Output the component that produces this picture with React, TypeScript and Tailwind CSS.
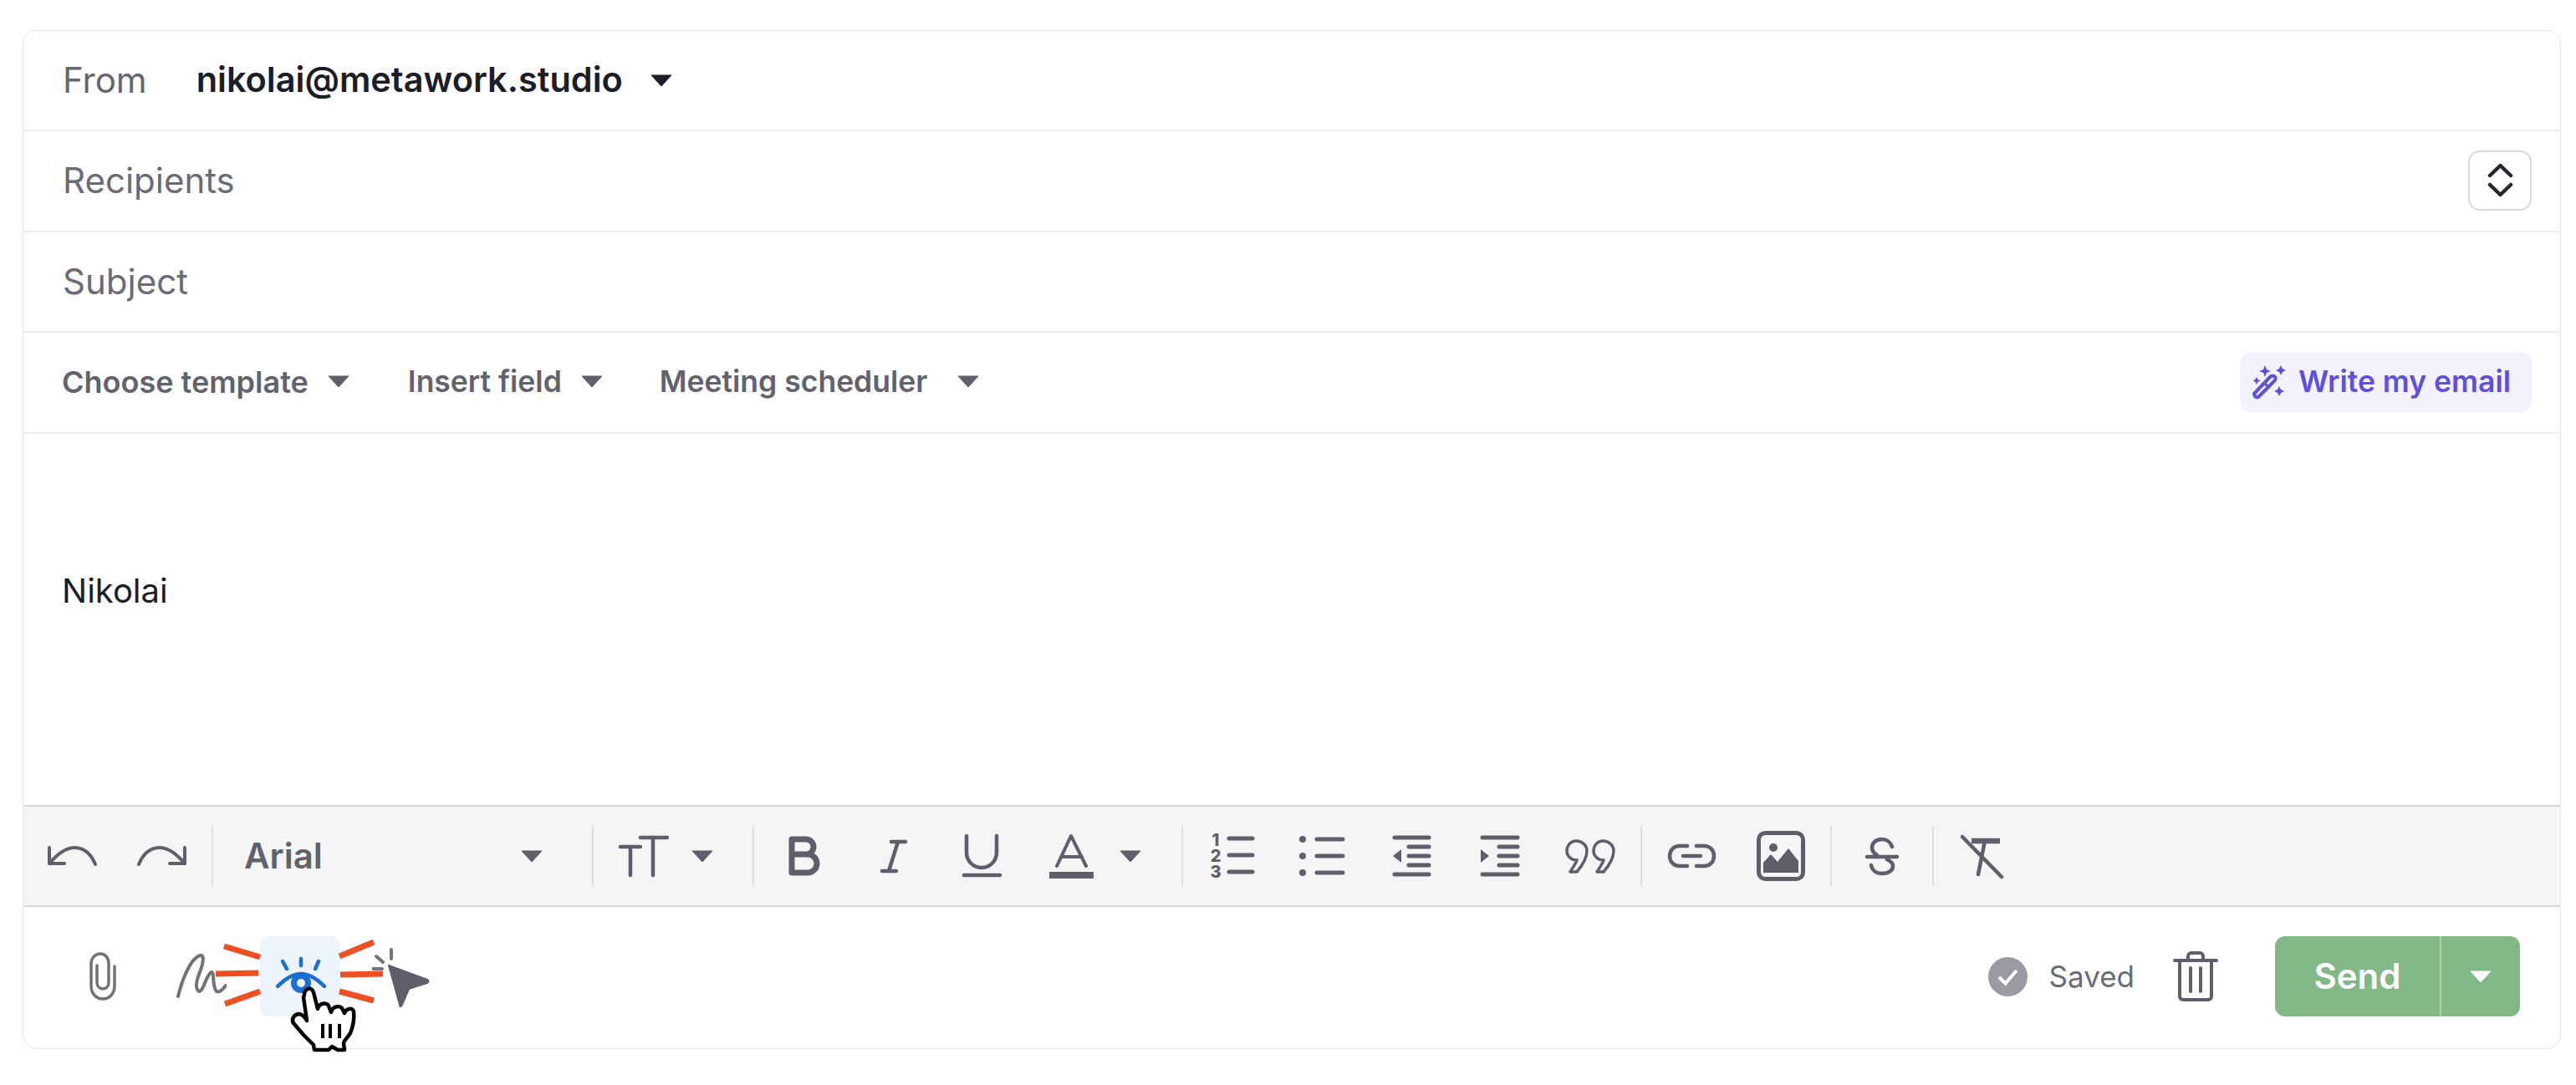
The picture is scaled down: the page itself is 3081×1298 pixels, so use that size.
import React from "react";

const Caret = ({ className = "", color = "#5f5f6b" }: { className?: string; color?: string }) => (
  <svg width="26" height="15" viewBox="0 0 26 15" className={"shrink-0 " + className}>
    <path d="M1 1H25L13 14Z" fill={color} stroke={color} strokeWidth="1" strokeLinejoin="round" />
  </svg>
);

const Sep = ({ className = "" }: { className?: string }) => (
  <div className={"w-[2px] h-[72px] shrink-0 bg-[#dedee1] " + className} />
);

const G = "#5f5f6b";

const Ico = ({ w, h, className = "", sw = 4.5, children }: { w: number; h: number; className?: string; sw?: number; children: React.ReactNode }) => (
  <svg width={w} height={h} viewBox={`0 0 ${w} ${h}`} fill="none" stroke={G} strokeWidth={sw} strokeLinecap="round" strokeLinejoin="round" className={"shrink-0 overflow-visible " + className}>
    {children}
  </svg>
);

export default function App() {
  return (
    <div className="w-[3081px] h-[1298px] bg-white pt-[36px] pl-[27px] font-['Inter',sans-serif] overflow-hidden">
      <div className="w-[3036px] h-[1219px] border border-[#e8e8eb] rounded-[16px] flex flex-col">
        <div className="h-[120px] shrink-0 border-b-2 border-[#eeeef0] flex items-center pl-[47px] text-[42px] leading-none">
          <span className="text-[#66666f]">From</span>
          <span className="ml-[59px] text-[41.5px] font-semibold text-[#1d1d29]">nikolai@metawork.studio</span>
          <Caret className="ml-[33px]" color="#1d1d29" />
        </div>
        <div className="h-[121px] shrink-0 border-b-2 border-[#eeeef0] flex items-center justify-between pl-[47px] pr-[34px] pb-[2px]">
          <span className="text-[42px] leading-none text-[#6b6b75]">Recipients</span>
          <button className="w-[76px] h-[72px] border-2 border-[#d9d9dc] rounded-[14px] flex items-center justify-center">
            <svg width="31" height="43" viewBox="0 0 31 43" fill="none" stroke="#26262e" strokeWidth="4.5" strokeLinecap="round" strokeLinejoin="round">
              <path d="M3 16L15.5 4L28 16M3 27L15.5 39L28 27" />
            </svg>
          </button>
        </div>
        <div className="h-[120px] shrink-0 border-b-2 border-[#eeeef0] flex items-center pl-[47px] text-[42px] leading-none text-[#6b6b75]">
          Subject
        </div>
        <div className="h-[121px] shrink-0 border-b-2 border-[#eeeef0] flex items-center pl-[46px] pr-[34px] pb-[2px] text-[36px] leading-none font-semibold text-[#62626c]">
          <span>Choose template</span>
          <Caret className="ml-[23px]" />
          <span className="ml-[70px] text-[35.5px]">Insert field</span>
          <Caret className="ml-[23px]" />
          <span className="ml-[68px] text-[35.5px]">Meeting scheduler</span>
          <Caret className="ml-[36px]" />
          <button className="ml-auto w-[349px] h-[72px] rounded-[14px] bg-[#f4f2fe] flex items-center pl-[14px] text-[35.5px] text-[#5d4fe0]">
            <svg width="42" height="42" viewBox="0 0 42 42" fill="none" className="shrink-0">
              <path d="M4 38L3 35L22 15C24 13 27 13 28 15C29 17 29 18 27 20L8 39C6 40 5 39 4 38Z" stroke="#5d4fe0" strokeWidth="4" strokeLinejoin="round" />
              <path d="M15 22L21 28" stroke="#5d4fe0" strokeWidth="3" />
              <path d="M16 1L18 6L23 8L18 10L16 15L14 10L9 8L14 6ZM35 1L37 5L41 7L37 9L35 13L33 9L29 7L33 5ZM6 15L7.5 18L10.500 19.500L7.5 21L6 24L4.500 21L1.500 19.500L4.500 18ZM33 26L35 30L39 32L35 34L33 38L31 34L27 32L31 30Z" fill="#5d4fe0" />
            </svg>
            <span className="ml-[14px]">Write my email</span>
          </button>
        </div>
        <div className="h-[444px] shrink-0 pl-[46px] pt-[168px] text-[#1d1d29] text-[40px] leading-none">
          Nikolai
        </div>
        <div className="h-[122px] shrink-0 border-y-2 border-[#d8d8da] bg-[#f5f5f6] flex items-center">
          <Ico w={59} h={24} className="ml-[29px]" sw={4}>
            <path d="M2 2V21H20M2 21C14 7 24 2 32 2C44 2 52 10 57 22" />
          </Ico>
          <Ico w={58} h={24} className="ml-[49px]" sw={4}>
            <path d="M56 2V21H38M56 21C44 7 34 2 26 2C14 2 6 10 1 22" />
          </Ico>
          <Sep className="ml-[30px]" />
          <span className="ml-[37px] w-[331px] text-[42px] leading-none font-semibold text-[#62626c]">Arial</span>
          <Caret />
          <Sep className="ml-[59px]" />
          <Ico w={60} h={50} className="ml-[30px]">
            <path d="M2 14H26M14 14V48M26 3H58M41 3V48" />
          </Ico>
          <Caret className="ml-[27px]" />
          <Sep className="ml-[47px]" />
          <Ico w={37} h={48} className="ml-[41px]" sw={7}>
            <path d="M4 4H21A9 9 0 0 1 21 22H4ZM4 22H23A10.500 10.500 0 0 1 23 44H4Z" />
          </Ico>
          <Ico w={32} h={41} className="ml-[73px]">
            <path d="M13 3H30M2 38H19M21 3L10 38" />
          </Ico>
          <Ico w={47} h={52} className="ml-[66px]">
            <path d="M5 2V22A18 18 0 0 0 41 22V2M2 49H45" />
          </Ico>
          <Ico w={53} h={54} className="ml-[57px]" sw={4}>
            <path d="M9 39L26 3L44 39M14 28H39" />
            <rect x="0" y="46" width="53" height="8" fill={G} stroke="none" />
          </Ico>
          <Caret className="ml-[31px]" />
          <Sep className="ml-[48px]" />
          <Ico w={52} h={52} className="ml-[33px]" sw={5}>
            <path d="M22 5H50M22 25H50M22 45H50" />
            <g fill={G} stroke="none" fontFamily="Inter, sans-serif" fontWeight="800" fontSize="20" textAnchor="middle">
              <text x="6" y="14">1</text>
              <text x="6" y="33">2</text>
              <text x="6" y="52">3</text>
            </g>
          </Ico>
          <Ico w={54} h={52} className="ml-[54px]" sw={5}>
            <path d="M21 6H52M21 26H52M21 46H52" />
            <g fill={G} stroke="none">
              <circle cx="4" cy="6" r="4" />
              <circle cx="4" cy="26" r="4" />
              <circle cx="4" cy="46" r="4" />
            </g>
          </Ico>
          <Ico w={46} h={50} className="ml-[57px]" sw={5}>
            <path d="M3 3H44M20 14H44M20 25H44M20 36H44M3 47H44" />
            <path d="M1 25L11 17V33Z" fill={G} stroke="none" />
          </Ico>
          <Ico w={47} h={50} className="ml-[59px]" sw={5}>
            <path d="M3 3H45M23 14H45M23 25H45M23 36H45M3 47H45" />
            <path d="M11 25L1 17V33Z" fill={G} stroke="none" />
          </Ico>
          <Ico w={59} h={41} className="ml-[55px]" sw={3.5}>
            <path d="M13 2C20 2 26 7 26 14C26 22 20 32 14 39H6C10 33 13 28 14 25C7 25 2 20 2 14C2 7 7 2 13 2Z" />
            <path d="M45 2C52 2 58 7 58 14C58 22 52 32 46 39H38C42 33 45 28 46 25C39 25 34 20 34 14C34 7 39 2 45 2Z" />
          </Ico>
          <Sep className="ml-[31px]" />
          <Ico w={59} h={30} className="ml-[30px]">
            <path d="M24 3H15C7 3 3 9 3 15C3 21 7 27 15 27H24M35 3H44C52 3 56 9 56 15C56 21 52 27 44 27H35M19 15H40" />
          </Ico>
          <Ico w={58} h={60} className="ml-[48px]" sw={5}>
            <rect x="2.500" y="2.500" width="53" height="55" rx="8" />
            <circle cx="20" cy="20" r="5" fill={G} stroke="none" />
            <path d="M8 50V38L17 28L25 37L38 21L50 36V50Z" fill={G} stroke="none" />
          </Ico>
          <Sep className="ml-[30px]" />
          <Ico w={40} h={47} className="ml-[40px]">
            <path d="M32 12C30 6 25 3 20 3C12 3 8 8 8 13C8 18 11 20 14 22M26 27C30 29 33 31 33 35C33 41 27 44 20 44C13 44 8 40 7 34M2 24H38" />
          </Ico>
          <Sep className="ml-[40px]" />
          <Ico w={51} h={51} className="ml-[32px]">
            <path d="M2 2L49 50M29 7L21 47" />
            <path d="M13 7H47" strokeWidth="6.500" strokeLinecap="butt" />
          </Ico>
        </div>
        <div className="flex-1 flex items-center justify-between pl-[47px] pr-[48px] pb-[3px]">
          <div className="flex items-center gap-[22px]">
            <button className="w-[96px] h-[96px] flex items-center justify-center">
              <svg width="32" height="58" viewBox="0 0 32 58" fill="none" stroke="#72727b" strokeWidth="3.500" strokeLinecap="round">
                <path d="M30 17V40C30 50 24 56 16 56C8 56 2 50 2 40V14C2 7 7 2 13 2C19 2 23 7 23 14V36C23 41 20 44 16 44C12 44 9 41 9 36V16" />
              </svg>
            </button>
            <button className="w-[96px] h-[96px] flex items-center justify-center">
              <svg width="60" height="54" viewBox="0 0 60 54" fill="none" stroke="#72727b" strokeWidth="4" strokeLinecap="round" strokeLinejoin="round">
                <path d="M2 51C6 34 16 6 28 2C34 0 32 12 28 22C24 32 22 42 27 45C32 46 36 24 42 22C46 22 42 38 48 45C52 47 56 42 59 38" />
              </svg>
            </button>
            <div className="relative w-[96px] h-[96px] rounded-[12px] bg-[#edf4fd]">
              <svg width="300" height="188" viewBox="250 1110 300 188" fill="none" className="absolute left-[-61px] top-[-10px] overflow-visible">
                <g stroke="#f04e23" strokeWidth="7">
                  <path d="M268 1132L311 1145M258 1165L309 1164M269 1201L311 1186M406 1144L447 1127M407 1166L458 1165M406 1186L447 1197" />
                </g>
                <g stroke="#1a6fd0" strokeWidth="4.500" strokeLinecap="round">
                  <path d="M338 1150L343 1159M360 1147V1155M381 1150L377 1159M332 1180C344 1168 352 1165 360 1165C368 1165 376 1168 388 1180" />
                </g>
                <circle cx="360" cy="1176" r="8.500" stroke="#1a6fd0" strokeWidth="7" />
                <path d="M364 1190C364 1183 372 1179 375 1187L380 1207C382 1199 393 1198 394 1206L396 1211C398 1203 408 1202 410 1208L412 1212C414 1206 422 1205 423 1210C424 1218 423 1226 419 1236C416 1241 411 1245 411 1248L412 1256H404L397 1252L393 1256H376L375 1250L363 1238L351 1224C348 1219 352 1213 358 1213C362 1214 365 1217 367 1221L363 1193Z" fill="#fff" stroke="#000" strokeWidth="4.500" strokeLinejoin="round" />
                <path d="M386 1225V1242M395 1225V1242M406 1225V1242" stroke="#000" strokeWidth="4" />
              </svg>
            </div>
            <button className="w-[96px] h-[96px] relative">
              <svg width="70" height="72" viewBox="0 0 70 72" fill="none" className="absolute left-[16px] top-[14px]">
                <path d="M20 21L66 38C68 39 68 41 66 42L44 49L36 68C35 71 33 71 33 68Z" fill={G} stroke={G} strokeWidth="2" strokeLinejoin="round" />
                <path d="M23 2V13M5 10L13 17M1 25H12" stroke="#74747d" strokeWidth="4" strokeLinecap="round" />
              </svg>
            </button>
          </div>
          <div className="flex items-center">
            <svg width="47" height="47" viewBox="0 0 47 47">
              <circle cx="23.500" cy="23.500" r="23.500" fill="#9a9aa3" />
              <path d="M13 24L20.500 31.500L34 16" fill="none" stroke="#fff" strokeWidth="4" />
            </svg>
            <span className="ml-[26px] text-[35px] leading-none text-[#6b6b75]">Saved</span>
            <svg width="54" height="60" viewBox="0 0 54 60" fill="none" stroke={G} strokeWidth="4" strokeLinecap="round" strokeLinejoin="round" className="ml-[46px]">
              <path d="M2 11H52M8 11V54A4 4 0 0 0 12 58H42A4 4 0 0 0 46 54V11M18 11V6A4 4 0 0 1 22 2H32A4 4 0 0 1 36 6V11M21 20V48M33 20V48" />
            </svg>
            <div className="ml-[68px] w-[293px] h-[96px] rounded-[12px] bg-[#82b887] flex text-white">
              <div className="w-[199px] flex items-center justify-center text-[42px] leading-none font-semibold border-r-2 border-[#aed3b1]">Send</div>
              <div className="flex-1 flex items-center justify-center">
                <Caret color="#ffffff" />
              </div>
            </div>
          </div>
        </div>
      </div>
    </div>
  );
}
